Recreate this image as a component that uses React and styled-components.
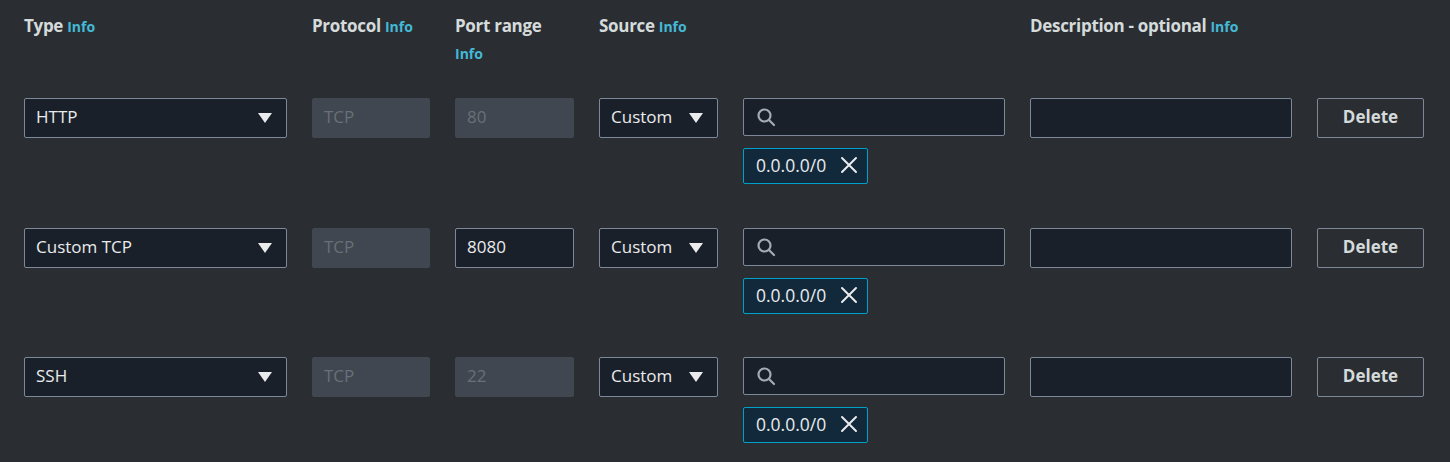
import styled, { createGlobalStyle } from "styled-components";

const GlobalStyle = createGlobalStyle`
    body {
        margin: 0;
        background: #2a2e33;
        font-family: "Open Sans", "Noto Sans", sans-serif;
    }
`

const Wrapper = styled.section`
    width: 1450px;
    height: 462px;
    box-sizing: border-box;
    padding: 12px 26px 0 24px;
    background: #2a2e33;
`

const Grid = styled.div`
    display: grid;
    grid-template-columns: 263px 118px 119px 119px 262px 262px 107px;
    column-gap: 25px;
    align-items: start;
`

const HeadRow = styled(Grid)`
    margin-bottom: 30px;
`

const HeadCell = styled.div`
    color: #d5dbdb;
    font-size: 17px;
    font-weight: 700;
    line-height: 28px;
    letter-spacing: -0.3px;
`

const Info = styled.span`
    color: #44b9d6;
    font-size: 14px;
    font-weight: 700;
    margin-left: 4px;
    letter-spacing: 0;
    ${props => props.block && `
        display: block;
        margin-left: 0;
    `}
`

const Row = styled(Grid)`
    margin-bottom: 43.5px;
`

const Field = styled.div`
    box-sizing: border-box;
    height: ${props => props.h || 40}px;
    border: 1px solid ${props => props.disabled ? "#414750" : "#7d8998"};
    background: ${props => props.disabled ? "#414750" : "#1a2029"};
    border-radius: 2px;
    display: flex;
    align-items: center;
    padding: 0 11px 3px;
    color: ${props => props.disabled ? "#687078" : "#e9ebed"};
    font-size: 17px;
`

const SelectField = styled(Field)`
    justify-content: space-between;
    padding-right: 14px;
`

const Caret = styled.span`
    width: 0;
    height: 0;
    margin-top: 3px;
    border-left: 7px solid transparent;
    border-right: 7px solid transparent;
    border-top: 10px solid #e9ebed;
`

const SourceCol = styled.div`
    display: flex;
    flex-direction: column;
    align-items: flex-start;
    gap: 12px;
`

const SearchBox = styled(Field)`
    width: 100%;
    padding: 0 12px;
`

const Token = styled.div`
    box-sizing: border-box;
    height: 36px;
    display: flex;
    align-items: center;
    gap: 14px;
    padding: 0 9px 2px 12px;
    border: 1px solid #00a1c9;
    border-radius: 2px;
    background: #12293b;
    color: #e9ebed;
    font-size: 17.5px;
`

const DeleteBtn = styled.div`
    box-sizing: border-box;
    height: 40px;
    border: 1px solid #7d8998;
    border-radius: 2px;
    display: flex;
    align-items: center;
    justify-content: center;
    color: #d5dbdb;
    font-weight: 700;
    font-size: 17px;
    padding-bottom: 3px;
`

const SearchIcon = () => (
    <svg width="20" height="20" viewBox="0 0 20 20" fill="none" stroke="#a4abb3" strokeWidth="2.2" strokeLinecap="round">
        <circle cx="8.5" cy="8.5" r="6" />
        <path d="M13 13l5 5" />
    </svg>
)

const CloseIcon = () => (
    <svg width="18" height="18" viewBox="0 0 18 18" fill="none" stroke="#e9ebed" strokeWidth="2" strokeLinecap="round">
        <path d="M2 2l14 14M16 2L2 16" />
    </svg>
)

const rules = [
    { type: "HTTP", port: "80", portDisabled: true },
    { type: "Custom TCP", port: "8080", portDisabled: false },
    { type: "SSH", port: "22", portDisabled: true },
]

function App() {
    return (
        <Wrapper>
            <GlobalStyle />
            <HeadRow>
                <HeadCell>Type<Info>Info</Info></HeadCell>
                <HeadCell>Protocol<Info>Info</Info></HeadCell>
                <HeadCell>Port range<Info block>Info</Info></HeadCell>
                <HeadCell>Source<Info>Info</Info></HeadCell>
                <HeadCell />
                <HeadCell>Description - optional<Info>Info</Info></HeadCell>
                <HeadCell />
            </HeadRow>
            {rules.map(r =>
                <Row key={r.type}>
                    <SelectField>{r.type}<Caret /></SelectField>
                    <Field disabled>TCP</Field>
                    <Field disabled={r.portDisabled}>{r.port}</Field>
                    <SelectField>Custom<Caret /></SelectField>
                    <SourceCol>
                        <SearchBox h={38}><SearchIcon /></SearchBox>
                        <Token>0.0.0.0/0<CloseIcon /></Token>
                    </SourceCol>
                    <Field />
                    <DeleteBtn>Delete</DeleteBtn>
                </Row>
            )}
        </Wrapper>
    )
}

export default App;
